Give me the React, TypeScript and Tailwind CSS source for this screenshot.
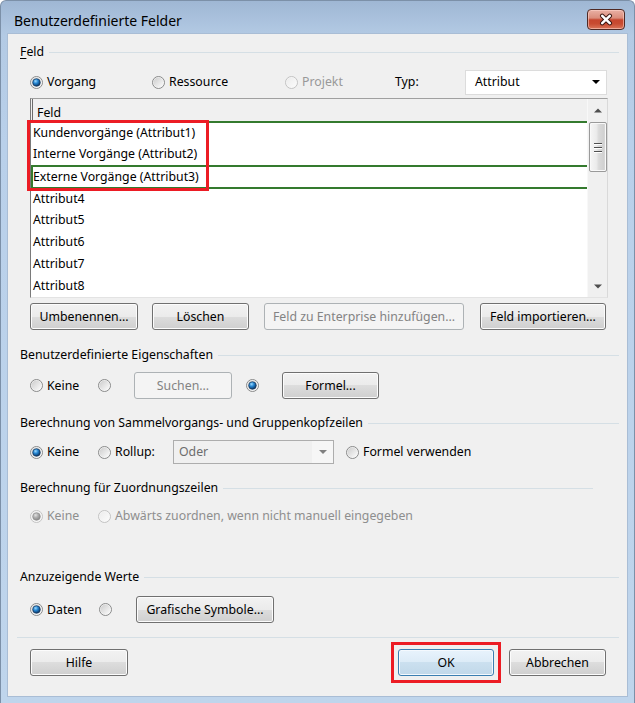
import { useId, type ReactNode } from "react";

const FONT = "font-['Noto_Sans','Open_Sans',sans-serif]";

function Radio({ checked = false, disabled = false }: { checked?: boolean; disabled?: boolean }) {
  const id = useId().replace(/[^a-zA-Z0-9]/g, "");
  return (
    <svg width="13" height="13" viewBox="0 0 13 13" className="shrink-0">
      <defs>
        <linearGradient id={`ring${id}`} x1="0" y1="0" x2="1" y2="1">
          <stop offset="0" stopColor={disabled ? "#ececec" : "#cccccc"} />
          <stop offset="1" stopColor={disabled ? "#fbfbfb" : "#fdfdfd"} />
        </linearGradient>
        <radialGradient id={`dot${id}`} cx="0.38" cy="0.32" r="0.7">
          <stop offset="0" stopColor={disabled ? "#e2e2e2" : "#9ad9ff"} />
          <stop offset="0.45" stopColor={disabled ? "#b0b0b0" : "#2484d0"} />
          <stop offset="1" stopColor={disabled ? "#858585" : "#0b2f5a"} />
        </radialGradient>
      </defs>
      <circle cx="6.5" cy="6.5" r="6" fill="#f6f6f6" stroke={disabled ? "#c2c2c2" : "#888989"} />
      <circle cx="6.5" cy="6.5" r="5" fill={`url(#ring${id})`} />
      {checked && (
        <circle
          cx="6.5"
          cy="6.5"
          r="3.8"
          fill={`url(#dot${id})`}
          stroke={disabled ? "#8e8e8e" : "#15365c"}
          strokeWidth="0.7"
        />
      )}
    </svg>
  );
}

function Btn({
  children,
  className = "",
  disabled = false,
  primary = false,
}: {
  children: ReactNode;
  className?: string;
  disabled?: boolean;
  primary?: boolean;
}) {
  let look =
    "border-[#707070] bg-[linear-gradient(#f2f2f2_0%,#ebebeb_50%,#dddddd_50%,#cfcfcf_100%)] shadow-[inset_0_0_0_1px_#fcfcfc] text-black";
  if (disabled) look = "border-[#adb2b5] bg-[#f4f4f4] text-[#838383]";
  if (primary)
    look =
      "border-[#3c7fb1] bg-[linear-gradient(#e8f3fc_0%,#dcebf7_50%,#cbe0ef_50%,#c1d8e9_100%)] shadow-[inset_0_0_0_1px_#f4f9fe] text-black";
  return (
    <div
      className={`h-[27px] shrink-0 rounded-[3px] border flex items-center justify-center whitespace-nowrap ${look} ${className}`}
    >
      {children}
    </div>
  );
}

function Section({ children, className = "", lineClass = "mr-[8px]" }: { children: ReactNode; className?: string; lineClass?: string }) {
  return (
    <div className={`h-[16px] shrink-0 flex items-center pl-[12px] ${className}`}>
      <span className="whitespace-nowrap">{children}</span>
      <div className={`flex-1 h-px bg-[#d5dfe5] ml-[5px] ${lineClass}`} />
    </div>
  );
}

function CloseButton({ className = "" }: { className?: string }) {
  return (
    <div
      className={`w-[38px] h-[21px] shrink-0 rounded-[4px] border border-[#4f2a25] bg-[linear-gradient(#e9b0a4_0%,#da8d7c_42%,#c6462e_52%,#c84b31_72%,#da7559_100%)] shadow-[inset_0_0_0_1px_rgba(255,215,205,0.55)] flex items-center justify-center ${className}`}
    >
      <svg width="14" height="13" viewBox="0 0 14 13">
        <path d="M3.2 2.8 L10.8 10.2 M10.8 2.8 L3.2 10.2" stroke="#3a1712" strokeWidth="4.4" strokeLinecap="round" />
        <path d="M3.2 2.8 L10.8 10.2 M10.8 2.8 L3.2 10.2" stroke="#ffffff" strokeWidth="2.5" strokeLinecap="round" />
      </svg>
    </div>
  );
}

const plainRows = ["Attribut4", "Attribut5", "Attribut6", "Attribut7", "Attribut8"];

function FieldList() {
  return (
    <div className="relative mt-[3px] ml-[22px] w-[578px] h-[200px] shrink-0 bg-white border-t border-t-[#a0a0a0] border-l border-l-[#7a7a7a] border-r border-r-[#d9d9d9] border-b border-b-[#e3e3e3] flex">
      <div className="flex-1 flex flex-col">
        <div className="h-[22px] shrink-0 bg-[#f0f0f0] pl-[1px]">
          <div className="h-full border-l border-[#6b6b6b] pl-[4px] pt-[6px]">Feld</div>
        </div>
        <div className="h-[22px] shrink-0 border-t-2 border-[#347a2e] pl-[2px] flex items-center">
          Kundenvorgänge (Attribut1)
        </div>
        <div className="h-[22px] shrink-0 pl-[2px] flex items-center">Interne Vorgänge (Attribut2)</div>
        <div className="h-[22px] shrink-0 border-t-2 border-[#347a2e] shadow-[inset_2px_0_0_#347a2e] pl-[2px] flex items-center">
          Externe Vorgänge (Attribut3)
        </div>
        {plainRows.map((r, i) => (
          <div
            key={r}
            className={`h-[22px] shrink-0 pl-[2px] flex items-center ${i === 0 ? "border-t-2 border-[#347a2e]" : ""}`}
          >
            {r}
          </div>
        ))}
      </div>

      {/* vertical scrollbar */}
      <div className="w-[20px] shrink-0 bg-[#f0f0f0] border-l border-[#f8f8f8] flex flex-col items-center">
        <div className="h-[22px] shrink-0 flex items-center justify-center">
          <svg width="8" height="5" viewBox="0 0 8 5">
            <path d="M0 4.5 L4 0.5 L8 4.5 Z" fill="#4f4f4f" />
          </svg>
        </div>
        <div className="mt-[1px] w-[18px] h-[50px] shrink-0 rounded-[2px] border border-[#9a9a9a] bg-[linear-gradient(90deg,#f6f6f6_0%,#ebebeb_40%,#dadada_55%,#d1d1d1_85%,#dfdfdf_100%)] shadow-[inset_0_0_0_1px_#f9f9f9] flex flex-col items-center justify-center gap-[3px]">
          <div className="w-[8px] h-px bg-[#505050] shadow-[0_1px_0_#ffffff]" />
          <div className="w-[8px] h-px bg-[#505050] shadow-[0_1px_0_#ffffff]" />
          <div className="w-[8px] h-px bg-[#505050] shadow-[0_1px_0_#ffffff]" />
        </div>
        <div className="flex-1" />
        <div className="h-[22px] shrink-0 flex items-center justify-center">
          <svg width="8" height="5" viewBox="0 0 8 5">
            <path d="M0 0.5 L8 0.5 L4 4.5 Z" fill="#4f4f4f" />
          </svg>
        </div>
      </div>

      {/* red highlight frame over the first three rows */}
      <div className="absolute left-[-4px] top-[21px] w-[182px] h-[71px] border-[3px] border-[#ec1c24] pointer-events-none" />
    </div>
  );
}

export default function App() {
  return (
    <div className={`w-[635px] h-[703px] overflow-hidden ${FONT} text-[12.3px] leading-[16px] text-black`}>
      <div className="w-full h-full flex flex-col rounded-t-[6px] border-x border-t border-[#7c90a8] bg-[linear-gradient(180deg,#9fb7d4_0px,#b3cae4_34px,#b9d0ea_140px,#bfd5ec_100%)]">
        {/* caption bar */}
        <div className="h-[33px] shrink-0 flex items-start justify-between">
          <div className="mt-[10px] ml-[13px] text-[14px] leading-[20px]">Benutzerdefinierte Felder</div>
          <CloseButton className="mt-[8px] mr-[9px]" />
        </div>

        {/* dialog body */}
        <div className="mx-[7px] h-[662px] shrink-0 bg-[#f0f0f0] shadow-[0_0_0_1px_#a9bdd5] flex flex-col">
          <Section className="mt-[10px]">
            <span className="underline underline-offset-2">F</span>eld
          </Section>

          <div className="mt-[9px] h-[26px] shrink-0 flex items-center pl-[22px]">
            <div className="w-[122px] flex items-center gap-[4px]">
              <Radio checked />
              Vorgang
            </div>
            <div className="w-[133px] flex items-center gap-[4px]">
              <Radio />
              Ressource
            </div>
            <div className="w-[110px] flex items-center gap-[4px] text-[#999999]">
              <Radio disabled />
              Projekt
            </div>
            <div className="w-[70px]">Typ:</div>
            <div className="w-[142px] h-[25px] bg-white border border-[#dcdcdc] flex items-center justify-between pl-[9px] pr-[6px]">
              Attribut
              <svg width="8" height="4" viewBox="0 0 8 4">
                <path d="M0 0 H8 L4 4 Z" fill="#000000" />
              </svg>
            </div>
          </div>

          <FieldList />

          <div className="mt-[5px] h-[27px] shrink-0 flex items-center pl-[22px]">
            <Btn className="w-[108px]">Umbenennen...</Btn>
            <Btn className="ml-[14px] w-[97px]">Löschen</Btn>
            <Btn className="ml-[15px] w-[200px]" disabled>
              Feld zu Enterprise hinzufügen...
            </Btn>
            <Btn className="ml-[16px] w-[126px]">Feld importieren...</Btn>
          </div>

          <Section className="mt-[17px]">Benutzerdefinierte Eigenschaften</Section>

          <div className="mt-[9px] h-[27px] shrink-0 flex items-center pl-[22px]">
            <div className="w-[68px] flex items-center gap-[4px]">
              <Radio />
              Keine
            </div>
            <Radio />
            <Btn className="ml-[23px] w-[98px]" disabled>
              Suchen...
            </Btn>
            <div className="ml-[14px] flex items-center">
              <Radio checked />
            </div>
            <Btn className="ml-[23px] w-[97px]">Formel...</Btn>
          </div>

          <Section className="mt-[16px]">Berechnung von Sammelvorgangs- und Gruppenkopfzeilen</Section>

          <div className="mt-[9px] h-[24px] shrink-0 flex items-center pl-[22px]">
            <div className="w-[68px] flex items-center gap-[4px]">
              <Radio checked />
              Keine
            </div>
            <div className="w-[75px] flex items-center gap-[4px]">
              <Radio />
              Rollup:
            </div>
            <div className="w-[161px] h-[24px] border border-[#adadad] bg-[#f0f0f0] flex">
              <div className="flex-1 pl-[5px] flex items-center text-[#6d6d6d]">Oder</div>
              <div className="w-[21px] bg-[#f6f6f6] flex items-center justify-center">
                <svg width="8" height="4" viewBox="0 0 8 4">
                  <path d="M0 0 H8 L4 4 Z" fill="#808080" />
                </svg>
              </div>
            </div>
            <div className="ml-[12px] flex items-center gap-[4px]">
              <Radio />
              Formel verwenden
            </div>
          </div>

          <Section className="mt-[16px]" lineClass="mr-[34px]">
            Berechnung für Zuordnungszeilen
          </Section>

          <div className="mt-[10px] h-[20px] shrink-0 flex items-center pl-[22px] text-[#8e8e8e]">
            <div className="w-[68px] flex items-center gap-[4px]">
              <Radio checked disabled />
              Keine
            </div>
            <div className="flex items-center gap-[4px]">
              <Radio disabled />
              Abwärts zuordnen, wenn nicht manuell eingegeben
            </div>
          </div>

          <Section className="mt-[43px]">Anzuzeigende Werte</Section>

          <div className="mt-[11px] h-[27px] shrink-0 flex items-center pl-[22px]">
            <div className="w-[69px] flex items-center gap-[4px]">
              <Radio checked />
              Daten
            </div>
            <Radio />
            <Btn className="ml-[24px] w-[138px]">Grafische Symbole...</Btn>
          </div>

          <div className="mt-[14px] ml-[9px] mr-[8px] h-px shrink-0 bg-[#d5dfe5]" />

          <div className="mt-[11px] h-[27px] shrink-0 flex items-center pl-[22px]">
            <Btn className="w-[98px]">Hilfe</Btn>
            <div className="relative ml-[270px]">
              <Btn className="w-[96px]" primary>
                OK
              </Btn>
              {/* red highlight frame around the OK button */}
              <div className="absolute left-[-7px] top-[-7px] w-[110px] h-[41px] border-[3px] border-[#ec1c24] pointer-events-none" />
            </div>
            <Btn className="ml-[15px] w-[97px]">Abbrechen</Btn>
          </div>
        </div>
      </div>
    </div>
  );
}
